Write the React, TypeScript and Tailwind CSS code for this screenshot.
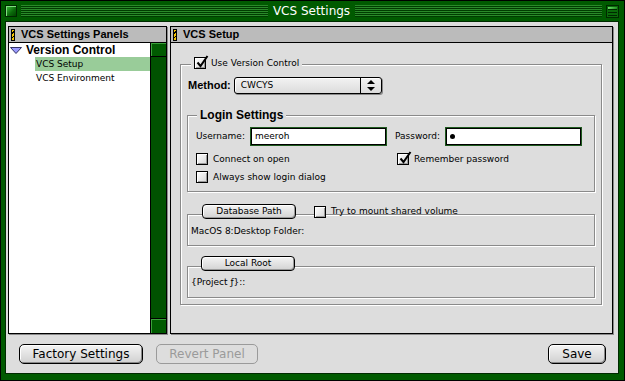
import React from 'react';

const geneva = "font-['DejaVu_Sans',sans-serif]";
const charcoal = "font-['Liberation_Sans',Arial,sans-serif] font-bold";

function Check({ checked }: { checked?: boolean }) {
  return (
    <span className="relative inline-block w-[12px] h-[12px] shrink-0 border border-black bg-[linear-gradient(135deg,#ffffff,#d6d6d6)] shadow-[inset_1px_1px_0_#fff,inset_-1px_-1px_0_#999]">
      {checked && (
        <svg className="absolute left-[1px] top-[-3px]" width="13" height="13" viewBox="0 0 13 13">
          <path d="M1.5 7.5 L4.5 11 L11.5 1" stroke="#000" strokeWidth="2" fill="none" />
        </svg>
      )}
    </span>
  );
}

function CheckRow({ label, checked }: { label: string; checked?: boolean }) {
  return (
    <div className="flex items-center gap-[5px] h-[12px]">
      <Check checked={checked} />
      <span className={`${geneva} text-[9px] leading-none text-black`}>{label}</span>
    </div>
  );
}

function SmallButton({ label, width }: { label: string; width: string }) {
  return (
    <div
      className={`${width} h-[15px] flex items-center justify-center rounded-[4px] border border-black bg-[linear-gradient(#f4f4f4,#d2d2d2)] shadow-[inset_1px_1px_0_#fff,inset_-1px_-1px_0_#999] ${geneva} text-[9px] leading-none text-black`}
    >
      {label}
    </div>
  );
}

function BigButton({ label, width, disabled }: { label: string; width: string; disabled?: boolean }) {
  return (
    <div
      className={`${width} h-[20px] flex items-center justify-center rounded-[5px] border ${
        disabled
          ? 'border-[#9a9a9a] text-[#9a9a9a] bg-[#dddddd]'
          : 'border-black text-black bg-[linear-gradient(#f4f4f4,#d0d0d0)] shadow-[inset_1px_1px_0_#fff,inset_-1px_-1px_0_#888]'
      } ${geneva} text-[12px] leading-none`}
    >
      {label}
    </div>
  );
}

function PanelHeader({ title }: { title: string }) {
  return (
    <div className="h-[16px] shrink-0 flex items-center gap-[6px] pl-[2px] bg-[#bbbbbb] border-b border-black">
      <span className="w-[4px] h-[12px] border border-black bg-[repeating-linear-gradient(135deg,#f5c400_0_2px,#000_2px_3px)]" />
      <span className={`${charcoal} text-[11px] leading-none text-black`}>{title}</span>
    </div>
  );
}

function TextField({ value, password }: { value: string; password?: boolean }) {
  return (
    <div className="w-[135px] h-[17px] flex items-center pl-[3px] bg-white border border-black shadow-[0_0_0_1px_#1e5a1e]">
      {password ? (
        <span className="w-[5px] h-[5px] rounded-full bg-black" />
      ) : (
        <span className={`${geneva} text-[9px] leading-none text-black`}>{value}</span>
      )}
    </div>
  );
}

const groupLine = 'relative border border-[#8a8a8a] shadow-[inset_1px_1px_0_#fff,1px_1px_0_#fff]';

export default function App() {
  return (
    <div className="w-[625px] h-[381px] flex flex-col bg-[#005a00] border border-black overflow-hidden">
      {/* Title bar */}
      <div className="h-[20px] shrink-0 flex items-center pl-[4px] pr-[5px]">
        <div className="w-[12px] h-[12px] border border-[#002800] bg-[linear-gradient(135deg,#3fbf3f,#0a6a0a_60%,#004400)] shadow-[inset_1px_1px_0_#7fdf7f]" />
        <div className="flex-1 ml-[4px] h-[12px] bg-[repeating-linear-gradient(#2a8a2a_0_1px,#003c00_1px_2px)]" />
        <span className={`${geneva} px-[5px] text-[12px] leading-none text-white`}>VCS Settings</span>
        <div className="flex-1 mr-[4px] h-[12px] bg-[repeating-linear-gradient(#2a8a2a_0_1px,#003c00_1px_2px)]" />
        <div className="w-[13px] h-[13px] border border-[#002800] bg-[#0a6a0a] flex flex-col gap-[2px] p-[1px]">
          <div className="h-[3px] bg-[linear-gradient(135deg,#6fe06f,#1a8a1a)] border-b border-[#002800]" />
          <div className="h-[1px] bg-[#002800]" />
          <div className="h-[1px] bg-[#002800]" />
        </div>
      </div>

      {/* Body */}
      <div className="ml-[4px] w-[614px] h-[353px] border border-[#002a00] bg-[#dddddd] flex flex-col pt-[4px] pl-[2px]">
        <div className="flex h-[308px]">
          {/* Left panel */}
          <div className="w-[159px] h-[308px] flex flex-col border border-black bg-white shadow-[1px_1px_0_#8a8a8a]">
            <PanelHeader title="VCS Settings Panels" />
            <div className="flex-1 flex">
              <div className="flex-1 flex flex-col">
                <div className="h-[14px] flex items-center gap-[4px] pl-[1px]">
                  <svg width="12" height="7" viewBox="0 0 12 7">
                    <path d="M0.5 0.5 H11.5 L6 6.5 Z" fill="#9a9aff" stroke="#333366" />
                  </svg>
                  <span className={`${charcoal} text-[12px] leading-none text-black`}>Version Control</span>
                </div>
                <div className="h-[14px] ml-[26px] flex items-center pl-[1px] bg-[#99cc99]">
                  <span className={`${geneva} text-[9px] leading-none text-black`}>VCS Setup</span>
                </div>
                <div className="h-[14px] ml-[26px] flex items-center pl-[1px]">
                  <span className={`${geneva} text-[9px] leading-none text-black`}>VCS Environment</span>
                </div>
              </div>
              {/* Scrollbar */}
              <div className="w-[16px] flex flex-col border-l border-black bg-[#005200]">
                <div className="h-[14px] border-b border-black bg-[#005a00] shadow-[inset_1px_1px_0_#3aa03a]" />
                <div className="flex-1" />
                <div className="h-[15px] border-t border-black bg-[#005a00] shadow-[inset_1px_1px_0_#3aa03a]" />
              </div>
            </div>
          </div>

          {/* Right panel */}
          <div className="ml-[3px] w-[443px] h-[308px] flex flex-col border border-black bg-[#dddddd] shadow-[1px_1px_0_#8a8a8a]">
            <PanelHeader title="VCS Setup" />
            <div className="flex-1 pt-[21px] pl-[9px]">
              {/* Use Version Control group */}
              <div className={`${groupLine} w-[422px] h-[241px] pt-[12px] px-[6px]`}>
                <div className="absolute left-[10px] top-[-8px] px-[3px] bg-[#dddddd]">
                  <CheckRow label="Use Version Control" checked />
                </div>

                <div className="flex items-center gap-[3px] pl-[1px]">
                  <span className={`${charcoal} text-[11px] leading-none text-black`}>Method:</span>
                  <div className="w-[148px] h-[17px] flex rounded-[3px] border border-black bg-[linear-gradient(#f2f2f2,#dcdcdc)] shadow-[1px_1px_0_#8a8a8a,inset_1px_1px_0_#fff]">
                    <div className={`flex-1 flex items-center pl-[6px] ${geneva} text-[9px] leading-none text-black`}>CWCYS</div>
                    <div className="w-[21px] flex items-center justify-center border-l border-black">
                      <svg width="8" height="11" viewBox="0 0 8 11">
                        <path d="M4 0 L8 4 H0 Z M0 7 H8 L4 11 Z" fill="#000" />
                      </svg>
                    </div>
                  </div>
                </div>

                {/* Login Settings */}
                <div className={`${groupLine} mt-[21px] w-[408px] h-[77px] pt-[12px] pl-[8px]`}>
                  <div className={`absolute left-[9px] top-[-7px] px-[3px] bg-[#dddddd] ${charcoal} text-[12px] leading-none text-black`}>
                    Login Settings
                  </div>
                  <div className="grid grid-cols-[199px_auto]">
                    <div className="flex items-center gap-[6px]">
                      <span className={`${geneva} text-[9px] leading-none text-black`}>Username:</span>
                      <TextField value="meeroh" />
                    </div>
                    <div className="flex items-center gap-[6px]">
                      <span className={`${geneva} text-[9px] leading-none text-black`}>Password:</span>
                      <TextField value="" password />
                    </div>
                    <div className="mt-[8px]">
                      <CheckRow label="Connect on open" />
                    </div>
                    <div className="mt-[8px] ml-[2px]">
                      <CheckRow label="Remember password" checked />
                    </div>
                    <div className="mt-[6px]">
                      <CheckRow label="Always show login dialog" />
                    </div>
                  </div>
                </div>

                {/* Database Path */}
                <div className={`${groupLine} mt-[22px] w-[408px] h-[32px] pt-[12px] pl-[3px]`}>
                  <div className="absolute left-[14px] top-[-11px] flex items-center gap-[18px]">
                    <SmallButton label="Database Path" width="w-[94px]" />
                    <CheckRow label="Try to mount shared volume" />
                  </div>
                  <div className={`${geneva} text-[9px] leading-none text-black`}>MacOS 8:Desktop Folder:</div>
                </div>

                {/* Local Root */}
                <div className={`${groupLine} mt-[20px] w-[408px] h-[32px] pt-[11px] pl-[3px]`}>
                  <div className="absolute left-[13px] top-[-11px]">
                    <SmallButton label="Local Root" width="w-[94px]" />
                  </div>
                  <div className={`${geneva} text-[9px] leading-none text-black`}>{'{Project ƒ}::'}</div>
                </div>
              </div>
            </div>
          </div>
        </div>

        {/* Bottom buttons */}
        <div className="flex items-center mt-[10px] pl-[11px] pr-[12px]">
          <BigButton label="Factory Settings" width="w-[124px]" />
          <div className="ml-[13px]">
            <BigButton label="Revert Panel" width="w-[102px]" disabled />
          </div>
          <div className="flex-1" />
          <BigButton label="Save" width="w-[58px]" />
        </div>
      </div>
    </div>
  );
}
